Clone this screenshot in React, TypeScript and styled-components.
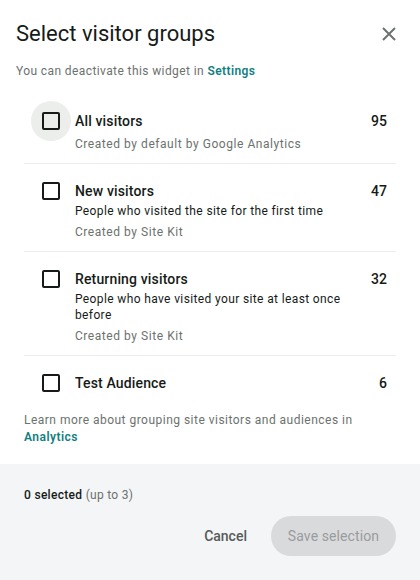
import React from "react";
import styled, { createGlobalStyle } from "styled-components";

const Global = createGlobalStyle`
  html, body { margin: 0; padding: 0; background: #ffffff; }
  body { font-family: Roboto, "Noto Sans", Arial, sans-serif; color: #161b18; -webkit-font-smoothing: antialiased; }
  * { box-sizing: border-box; }
`;

const Panel = styled.div`
  width: 420px;
  height: 580px;
  display: flex;
  flex-direction: column;
  background: #ffffff;
  overflow: hidden;
`;

const Header = styled.div`
  padding: 20px 19px 0 16px;
  display: flex;
  flex-direction: column;
`;

const TitleRow = styled.div`
  display: flex;
  align-items: center;
  justify-content: space-between;
`;

const Title = styled.h2`
  margin: 0;
  font-size: 22px;
  line-height: 28px;
  font-weight: 400;
  color: #161b18;
`;

const CloseButton = styled.button`
  border: 0;
  background: transparent;
  padding: 0;
  width: 24px;
  height: 24px;
  display: flex;
  align-items: center;
  justify-content: center;
  cursor: pointer;
`;

const Subtitle = styled.p`
  margin: 15px 0 0;
  font-size: 12px;
  line-height: 16px;
  color: #6c726e;
  letter-spacing: 0.4px;
`;

const Link = styled.a`
  color: #108080;
  font-weight: 600;
  text-decoration: none;
`;

const List = styled.div`
  margin: 15px 24px 0 24px;
  display: flex;
  flex-direction: column;
`;

const Row = styled.div<{ $last?: boolean }>`
  display: flex;
  align-items: flex-start;
  padding: 17px 9px 11px 7px;
  border-bottom: ${(p) => (p.$last ? "none" : "1px solid #ebeeea")};
`;

const CheckWrap = styled.div<{ $hover?: boolean }>`
  width: 40px;
  height: 40px;
  margin: -10px 4px -10px 0;
  flex: none;
  border-radius: 50%;
  display: flex;
  align-items: center;
  justify-content: center;
  background: ${(p) => (p.$hover ? "#ebeeea" : "transparent")};
`;

const Box = styled.span`
  width: 18px;
  height: 18px;
  border: 2px solid #161b18;
  border-radius: 2px;
  display: block;
`;

const Content = styled.div`
  flex: 1;
  display: flex;
  flex-direction: column;
`;

const Label = styled.div`
  font-size: 14px;
  line-height: 20px;
  font-weight: 500;
  color: #161b18;
  letter-spacing: 0.15px;
`;

const Description = styled.div`
  margin-top: 2px;
  font-size: 12px;
  line-height: 16px;
  color: #161b18;
  letter-spacing: 0.37px;
`;

const Meta = styled.div`
  margin-top: 5px;
  font-size: 12px;
  line-height: 16px;
  color: #6c726e;
  letter-spacing: 0.55px;
`;

const Count = styled.div`
  font-size: 14px;
  line-height: 20px;
  font-weight: 500;
  color: #161b18;
  margin-left: 12px;
`;

const LearnMore = styled.p`
  margin: 8px 24px 0;
  font-size: 12px;
  line-height: 17px;
  color: #6c726e;
  letter-spacing: 0.48px;
`;

const Footer = styled.div`
  margin-top: auto;
  flex: none;
  height: 116px;
  background: #f3f5f7;
  padding: 23px 24px 24px;
  display: flex;
  flex-direction: column;
`;

const Selected = styled.div`
  font-size: 12px;
  line-height: 16px;
  color: #161b18;
  font-weight: 500;
  letter-spacing: 0.3px;
`;

const Limit = styled.span`
  color: #6c726e;
  font-weight: 400;
`;

const Actions = styled.div`
  margin-top: auto;
  display: flex;
  justify-content: flex-end;
  gap: 8px;
`;

const TextButton = styled.button`
  height: 40px;
  border: 0;
  background: transparent;
  padding: 0 16px;
  font-family: inherit;
  font-size: 14px;
  font-weight: 500;
  color: #555b57;
  border-radius: 20px;
  cursor: pointer;
`;

const PillButton = styled.button`
  height: 40px;
  width: 125px;
  border: 0;
  background: #d9dadb;
  padding: 0 16px;
  font-family: inherit;
  font-size: 14px;
  font-weight: 400;
  color: #999c9d;
  border-radius: 20px;
  letter-spacing: 0.1px;
`;

type Group = {
  name: string;
  count: number;
  description?: string;
  meta?: string;
};

const groups: Group[] = [
  { name: "All visitors", count: 95, meta: "Created by default by Google Analytics" },
  { name: "New visitors", count: 47, description: "People who visited the site for the first time", meta: "Created by Site Kit" },
  { name: "Returning visitors", count: 32, description: "People who have visited your site at least once before", meta: "Created by Site Kit" },
  { name: "Test Audience", count: 6 },
];

export default function App() {
  return (
    <>
      <Global />
      <Panel>
        <Header>
          <TitleRow>
            <Title>Select visitor groups</Title>
            <CloseButton aria-label="Close">
              <svg width="16" height="16" viewBox="0 0 16 16">
                <path d="M2 2 L14 14 M14 2 L2 14" stroke="#6c726e" strokeWidth="2" fill="none" />
              </svg>
            </CloseButton>
          </TitleRow>
          <Subtitle>
            You can deactivate this widget in <Link href="#">Settings</Link>
          </Subtitle>
        </Header>
        <List>
          {groups.map((g, i) => (
            <Row key={g.name} $last={i === groups.length - 1}>
              <CheckWrap $hover={i === 0}>
                <Box />
              </CheckWrap>
              <Content>
                <Label>{g.name}</Label>
                {g.description && <Description>{g.description}</Description>}
                {g.meta && <Meta>{g.meta}</Meta>}
              </Content>
              <Count>{g.count}</Count>
            </Row>
          ))}
        </List>
        <LearnMore>
          Learn more about grouping site visitors and audiences in
          <br />
          <Link href="#">Analytics</Link>
        </LearnMore>
        <Footer>
          <Selected>
            0 selected <Limit>(up to 3)</Limit>
          </Selected>
          <Actions>
            <TextButton>Cancel</TextButton>
            <PillButton disabled>Save selection</PillButton>
          </Actions>
        </Footer>
      </Panel>
    </>
  );
}
